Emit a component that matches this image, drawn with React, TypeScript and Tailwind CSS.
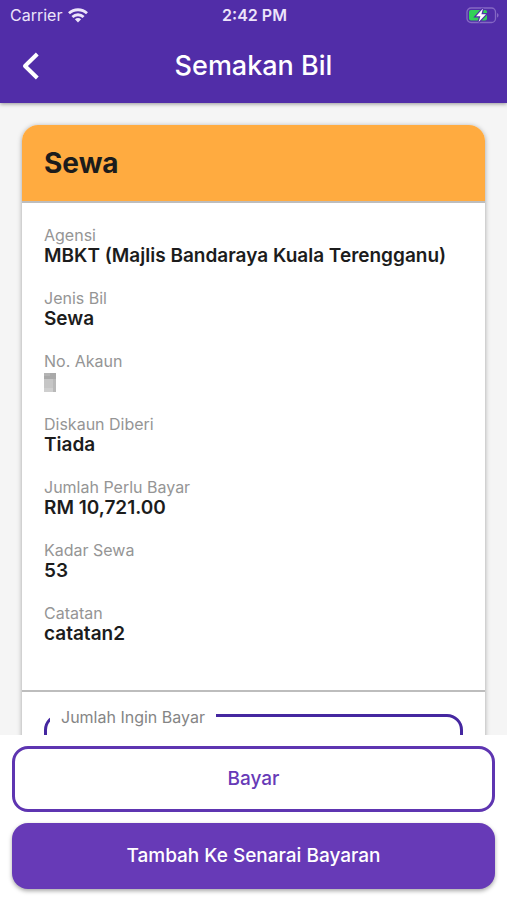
import React from 'react';

const details = [
  { label: 'Agensi', value: 'MBKT (Majlis Bandaraya Kuala Terengganu)' },
  { label: 'Jenis Bil', value: 'Sewa' },
  { label: 'No. Akaun', value: null },
  { label: 'Diskaun Diberi', value: 'Tiada' },
  { label: 'Jumlah Perlu Bayar', value: 'RM 10,721.00' },
  { label: 'Kadar Sewa', value: '53' },
  { label: 'Catatan', value: 'catatan2' },
];

function WifiIcon() {
  return (
    <svg width="20" height="15" viewBox="0 0 20 15" fill="none" stroke="currentColor" strokeWidth="2.8" aria-hidden="true">
      <path d="M1 5.2C6 .6 14 .6 19 5.2" />
      <path d="M4.4 9C7.6 6 12.4 6 15.6 9" />
      <path d="M10 14.4 6.9 11.3c1.8-1.6 4.4-1.6 6.2 0z" fill="currentColor" stroke="none" />
    </svg>
  );
}

function BatteryIcon() {
  return (
    <svg width="33" height="17" viewBox="0 0 33 17" fill="none" aria-hidden="true">
      <rect x="1" y="1" width="28.5" height="14.5" rx="4" stroke="#8568c4" strokeWidth="1.3" />
      <path d="M31 6v4.6c1-.4 1.5-1.3 1.5-2.3S32 6.4 31 6z" fill="#8568c4" />
      <rect x="3" y="3" width="18" height="10.5" rx="2" fill="#33d158" />
      <path d="M17 1.6 10 9.3h4.4L12.6 15 20 7.3h-4.6z" fill="#fff" stroke="#512da8" strokeWidth="2.4" paintOrder="stroke" />
    </svg>
  );
}

// Masked account number
function MaskedValue() {
  return (
    <svg width="12" height="19" viewBox="0 0 12 19" role="img" aria-label="No. Akaun" shapeRendering="crispEdges">
      <rect width="12" height="19" fill="#c6c6c6" />
      <rect width="12" height="6" fill="#a9a9a9" />
      <rect width="6" height="3" fill="#b4b4b4" />
      <rect x="9" y="6" width="3" height="13" fill="#b9b9b9" />
      <rect y="15" width="9" height="4" fill="#cfcfcf" />
    </svg>
  );
}

export default function App() {
  return (
    <div className="flex h-screen flex-col bg-[#f5f5f5] font-['Inter',sans-serif] text-[#1c1c1c]">
      <header className="z-10 bg-[#512da8] text-white shadow-[0_1px_4px_rgba(0,0,0,0.4)]">
        <div className="grid h-[30px] grid-cols-3 items-center pr-2 pl-[10px] text-base text-[#ece4fa]">
          <div className="flex items-center gap-[6px]">
            <span>Carrier</span>
            <WifiIcon />
          </div>
          <span className="text-center font-semibold">2:42 PM</span>
          <div className="flex justify-end">
            <BatteryIcon />
          </div>
        </div>
        <div className="grid h-[73px] grid-cols-[64px_1fr_64px] items-center">
          <button type="button" aria-label="Kembali" className="flex h-full items-center pb-[2px] pl-[22px]">
            <svg width="18" height="28" viewBox="0 0 18 28" fill="none" stroke="currentColor" strokeWidth="4" strokeLinejoin="round">
              <path d="M15.3 2 3 14l12.3 12" />
            </svg>
          </button>
          <h1 className="text-center text-[27px] font-medium">Semakan Bil</h1>
        </div>
      </header>

      <main className="min-h-0 flex-1 overflow-y-auto px-[22px] py-[22px] [scrollbar-width:none]">
        <section className="rounded-[16px] bg-white shadow-[0_1px_5px_rgba(0,0,0,0.35)]">
          <h2 className="rounded-t-[16px] bg-[#ffab40] px-[22px] py-[20px] text-[28px] leading-9 font-bold">Sewa</h2>
          <dl className="flex flex-col gap-[21px] border-y-2 border-[#bdbdbd] px-[22px] pt-[22px] pb-[45px]">
            {details.map((item) => (
              <div key={item.label}>
                <dt className="text-base leading-5 text-[#959595]">{item.label}</dt>
                <dd className="flex h-[22px] items-center text-[19px] leading-[22px] font-semibold">
                  {item.value ?? <MaskedValue />}
                </dd>
              </div>
            ))}
          </dl>
          <div className="px-[22px] pt-[11px] pb-6">
            <fieldset className="rounded-[16px] border-[3px] border-[#4527a0]">
              <legend className="ml-[3px] px-[11px] pt-1 text-base leading-5 text-[#858585]">
                <label htmlFor="amount">Jumlah Ingin Bayar</label>
              </legend>
              <input id="amount" type="text" inputMode="decimal" className="h-12 w-full px-4 text-lg outline-none" />
            </fieldset>
          </div>
        </section>
      </main>

      <footer className="flex flex-col gap-[11px] bg-white px-[12px] pt-[11px] pb-[11px]">
        <button type="button" className="h-[66px] rounded-[16px] border-[3px] border-[#5e35b1] text-[19px] font-medium text-[#673ab7]">
          Bayar
        </button>
        <button type="button" className="h-[66px] rounded-[16px] bg-[#673ab7] text-[19px] font-medium text-white shadow-[0_2px_4px_rgba(0,0,0,0.35)]">
          Tambah Ke Senarai Bayaran
        </button>
      </footer>
    </div>
  );
}
